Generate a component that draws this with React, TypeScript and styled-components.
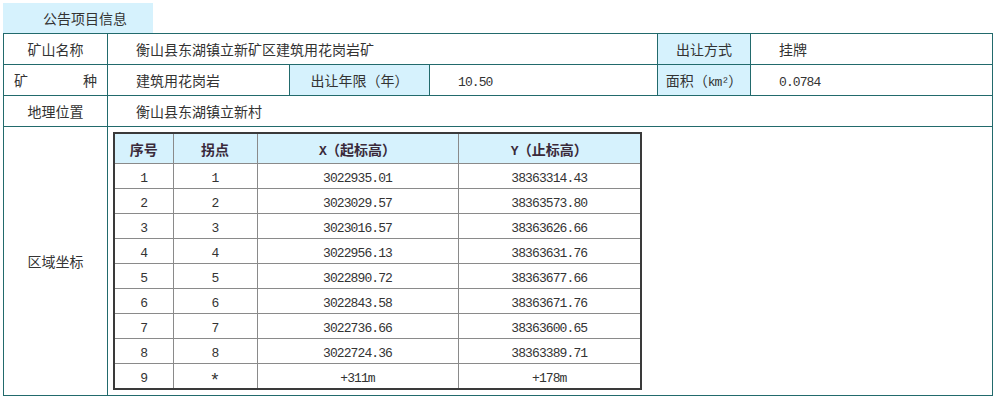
import * as React from 'react';
import styled, {createGlobalStyle} from 'styled-components';

const GlobalStyle = createGlobalStyle`
  html, body {
    margin: 0;
    padding: 0;
    background: #fff;
  }
  body {
    padding: 3px;
    font-family: "Noto Sans CJK SC", "Noto Sans", sans-serif;
    color: #333;
  }
`;

const points = [
  ['1', '1', '3022935.01', '38363314.43'],
  ['2', '2', '3023029.57', '38363573.80'],
  ['3', '3', '3023016.57', '38363626.66'],
  ['4', '4', '3022956.13', '38363631.76'],
  ['5', '5', '3022890.72', '38363677.66'],
  ['6', '6', '3022843.58', '38363671.76'],
  ['7', '7', '3022736.66', '38363600.65'],
  ['8', '8', '3022724.36', '38363389.71'],
  ['9', '*', '+311m', '+178m'],
];

const App = () => {
  return (
    <>
      <GlobalStyle />
      <Tab>公告项目信息</Tab>
      <InfoTable>
        <colgroup>
          <col style={{width: 104}} />
          <col style={{width: 182}} />
          <col style={{width: 140}} />
          <col style={{width: 228}} />
          <col style={{width: 93}} />
          <col />
        </colgroup>
        <tbody>
          <tr>
            <Label>矿山名称</Label>
            <Value colSpan={3}>衡山县东湖镇立新矿区建筑用花岗岩矿</Value>
            <Label $shaded>出让方式</Label>
            <Value>挂牌</Value>
          </tr>
          <tr>
            <Label>
              <Spread>
                <span>矿</span>
                <span>种</span>
              </Spread>
            </Label>
            <Value>建筑用花岗岩</Value>
            <Label $shaded>出让年限（年）</Label>
            <Value>
              <Num>10.50</Num>
            </Value>
            <Label $shaded>
              面积（<Num>km²</Num>）
            </Label>
            <Value>
              <Num>0.0784</Num>
            </Value>
          </tr>
          <tr>
            <Label>地理位置</Label>
            <Value colSpan={5}>衡山县东湖镇立新村</Value>
          </tr>
          <tr>
            <Label $tall>区域坐标</Label>
            <AreaCell colSpan={5}>
              <PointTable>
                <colgroup>
                  <col style={{width: 59}} />
                  <col style={{width: 84}} />
                  <col style={{width: 201}} />
                  <col />
                </colgroup>
                <thead>
                  <tr>
                    <Head>序号</Head>
                    <Head>拐点</Head>
                    <Head>
                      <Num>X</Num>（起标高）
                    </Head>
                    <Head>
                      <Num>Y</Num>（止标高）
                    </Head>
                  </tr>
                </thead>
                <tbody>
                  {points.map((row) => (
                    <tr key={row[0]}>
                      {row.map((cell, i) => (
                        <Cell key={i}>
                          {cell === '*' ? <Star>*</Star> : <Num>{cell}</Num>}
                        </Cell>
                      ))}
                    </tr>
                  ))}
                </tbody>
              </PointTable>
            </AreaCell>
          </tr>
        </tbody>
      </InfoTable>
    </>
  );
};

const Tab = styled.div`
  width: 150px;
  height: 30px;
  box-sizing: border-box;
  padding-left: 40px;
  background: #d6f2fd;
  font-size: 14px;
  line-height: 30px;
  color: #333;
`;

const InfoTable = styled.table`
  width: 990px;
  border-collapse: collapse;
  table-layout: fixed;
  font-size: 14px;
  td {
    border: 1px solid #226a6c;
    padding: 0;
  }
`;

const Label = styled.td<{$shaded?: boolean; $tall?: boolean}>`
  height: ${(p) => (p.$tall ? '265px' : '30px')};
  text-align: center;
  background: ${(p) => (p.$shaded ? '#d6f2fd' : '#fff')};
  white-space: nowrap;
`;

const Spread = styled.div`
  display: flex;
  justify-content: space-between;
  padding: 0 10px;
`;

const Value = styled.td`
  && {
    padding-left: 28px;
  }
  white-space: nowrap;
`;

const AreaCell = styled.td`
  && {
    padding: 5px 0 5px 5px;
  }
  vertical-align: top;
`;

const Num = styled.span`
  font-family: "Liberation Mono", "DejaVu Sans Mono", monospace;
  font-size: 13px;
  letter-spacing: -0.9px;
`;

const Star = styled.span`
  display: inline-block;
  font-family: "Liberation Mono", "DejaVu Sans Mono", monospace;
  font-size: 18px;
  line-height: 1;
  transform: translateY(4px);
`;

const PointTable = styled.table`
  width: 529px;
  border-collapse: collapse;
  table-layout: fixed;
  border: 2px solid #3a3a3a;
  && td,
  && th {
    border: 1px solid #8a8a8a;
    text-align: center;
    padding: 0;
  }
`;

const Head = styled.th`
  height: 29px;
  background: #d6f2fd;
  font-size: 14px;
  font-weight: bold;
  color: #3a2a3a;
  white-space: nowrap;
`;

const Cell = styled.td`
  height: 24px;
  font-size: 14px;
  color: #333;
`;

export default App;
